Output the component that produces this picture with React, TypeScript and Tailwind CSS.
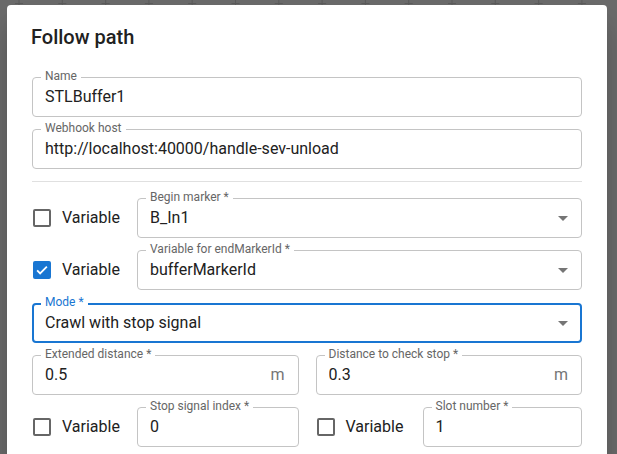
import React from 'react';

interface FieldProps {
  label: string;
  value: string;
  select?: boolean;
  focused?: boolean;
  adornment?: string;
  className?: string;
}

function Field({ label, value, select, focused, adornment, className = '' }: FieldProps) {
  return (
    <div className={`relative h-[40px] ${className}`}>
      <div
        className={`absolute inset-0 rounded-[4px] ${
          focused ? 'border-2 border-[#1976d2]' : 'border border-[#c4c4c4]'
        }`}
      />
      <span
        className={`absolute left-[9px] top-[-8px] bg-white px-[4px] text-[12px] leading-[15px] ${
          focused ? 'text-[#1976d2]' : 'text-[#666666]'
        }`}
      >
        {label}
      </span>
      <div className="relative flex h-full items-center pl-[13px] pr-[14px] text-[16px] text-[#212121]">
        <span className="flex-1 truncate">{value}</span>
        {adornment && <span className="text-[#757575]">{adornment}</span>}
        {select && (
          <svg viewBox="0 0 24 24" className="mr-[-7px] h-6 w-6 fill-[#757575]">
            <path d="M7 10l5 5 5-5z" />
          </svg>
        )}
      </div>
    </div>
  );
}

function Check({ checked, className = '' }: { checked?: boolean; className?: string }) {
  return (
    <label className={`flex items-center gap-[11px] text-[16px] text-[#212121] ${className}`}>
      {checked ? (
        <span className="flex h-[18px] w-[18px] items-center justify-center rounded-[2px] bg-[#1976d2]">
          <svg viewBox="0 0 24 24" className="h-[18px] w-[18px]">
            <path d="M5.5 12.5l4 4 9-9" stroke="white" strokeWidth={2.4} fill="none" />
          </svg>
        </span>
      ) : (
        <span className="h-[18px] w-[18px] rounded-[2px] border-2 border-[#666666]" />
      )}
      Variable
    </label>
  );
}

function Backdrop() {
  const xs = Array.from({ length: 15 }, (_, i) => 19 + i * 43.3);
  return (
    <svg className="absolute left-0 top-0" width="617" height="12">
      {xs.map((x) => (
        <g key={x} stroke="#5c5c5c" strokeWidth={1}>
          <line x1={x - 4} y1={3.5} x2={x + 4} y2={3.5} />
          <line x1={x} y1={0} x2={x} y2={7} />
        </g>
      ))}
    </svg>
  );
}

export default function App() {
  return (
    <div
      className="relative h-[454px] w-[617px] overflow-hidden bg-[#6b6b6b]"
      style={{ fontFamily: 'Roboto, "Liberation Sans", sans-serif' }}
    >
      <Backdrop />
      <div className="relative ml-[7px] mt-[5px] w-[600px] rounded-[4px] bg-white shadow-[0_11px_15px_-7px_rgba(0,0,0,0.2),0_24px_38px_3px_rgba(0,0,0,0.14)]">
        <h2 className="px-6 py-4 text-[20px] font-medium leading-[32px] text-[#212121]">Follow path</h2>

        <div className="px-[25px] pb-5">
          <div className="pt-2">
            <Field label="Name" value="STLBuffer1" />
            <Field className="mt-3" label="Webhook host" value="http://localhost:40000/handle-sev-unload" />
          </div>

          <div className="mt-3 h-px bg-[#e0e0e0]" />

          <div className="mt-4 flex items-center">
            <Check className="w-[105px] pl-[1px]" />
            <Field className="flex-1" label="Begin marker *" value="B_In1" select />
          </div>

          <div className="mt-3 flex items-center">
            <Check checked className="w-[105px] pl-[1px]" />
            <Field className="flex-1" label="Variable for endMarkerId *" value="bufferMarkerId" select />
          </div>

          <Field className="mt-[13px]" label="Mode *" value="Crawl with stop signal" select focused />

          <div className="mt-3 grid grid-cols-2 gap-[17px]">
            <Field label="Extended distance *" value="0.5" adornment="m" />
            <Field label="Distance to check stop *" value="0.3" adornment="m" />
          </div>

          <div className="mt-3 grid grid-cols-2 gap-[17px]">
            <div className="flex items-center">
              <Check className="w-[105px] pl-[1px]" />
              <Field className="flex-1" label="Stop signal index *" value="0" />
            </div>
            <div className="flex items-center">
              <Check className="w-[107px] pl-[1px]" />
              <Field className="flex-1" label="Slot number *" value="1" />
            </div>
          </div>

          <div className="mt-[4px] grid grid-cols-2 gap-[17px] text-[12px] leading-[18px] text-[#666666]">
            <div className="flex pl-[14px]">
              <span className="w-[193px]">Coordinate index on stop sign</span>
              <span>Must be 0-7</span>
            </div>
            <div className="pl-[108px]">Number of a slot in stopper</div>
          </div>
        </div>
      </div>
    </div>
  );
}
